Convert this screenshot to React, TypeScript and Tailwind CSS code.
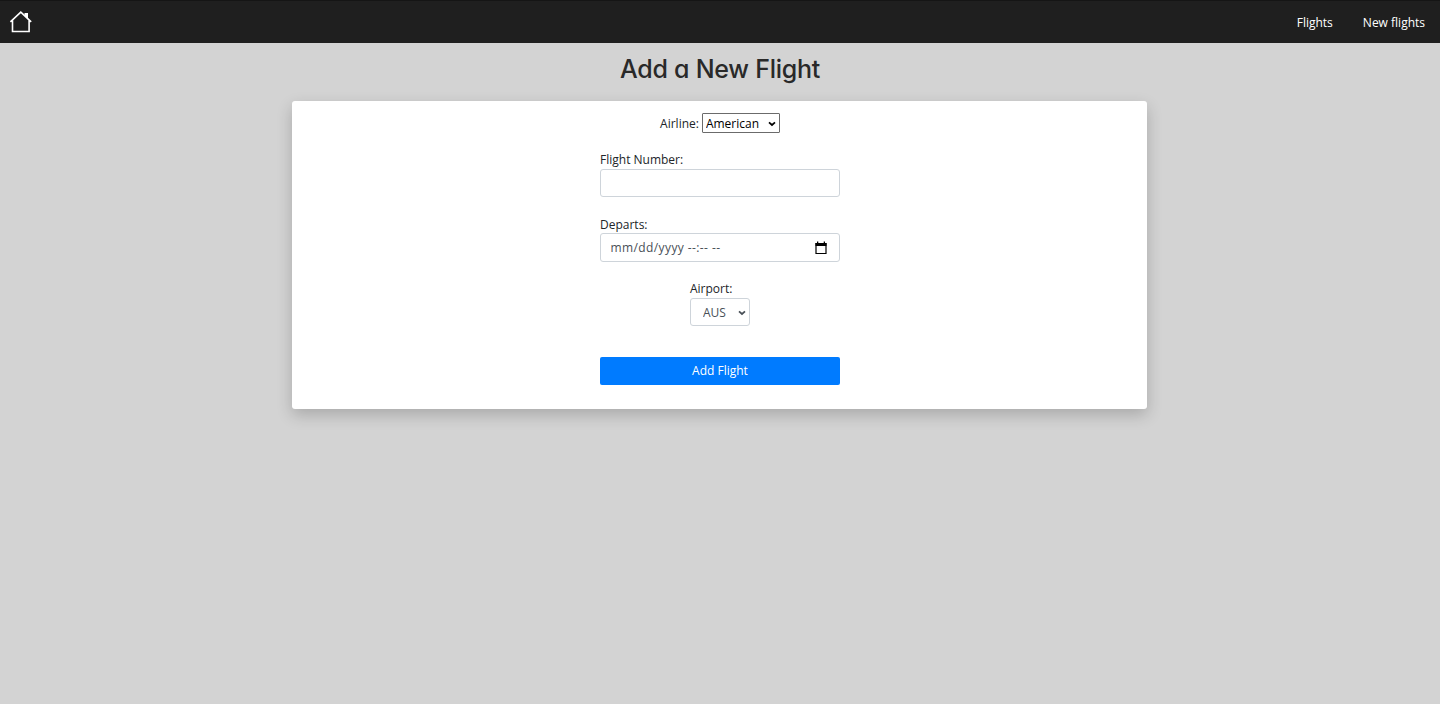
import React from 'react';

const field = 'rounded-[3px] border border-[#ced4da] bg-white text-[#495057]';

function Home() {
  return (
    <svg width="24" height="24" viewBox="0 0 24 24" fill="none" stroke="#fff" strokeWidth="1.6">
      <path d="M1.4 11.8 11.8 2.2l10.4 9.6M3.5 10.5v11h16.6v-11" />
      <path d="M15.5 3H19v6.5L15.5 6Z" fill="#fff" stroke="none" />
    </svg>
  );
}

function Chevron({ className }: { className: string }) {
  return (
    <svg className={'pointer-events-none absolute ' + className} width="8" height="6" viewBox="0 0 8 6" fill="none" stroke="currentColor" strokeWidth="1.7">
      <path d="m1 1.3 3 2.7 3-2.7" />
    </svg>
  );
}

function Calendar() {
  return (
    <svg width="12" height="14" viewBox="0 0 12 14" fill="none" stroke="#000">
      <path d="M1 2.5v10h10v-10Z" strokeWidth="1.2" />
      <path d="M.5 2h11v3H.5ZM2 .5h1.3V3H2ZM8.7.5H10V3H8.7Z" fill="#000" stroke="none" />
    </svg>
  );
}

export default function App() {
  return (
    <div className="min-h-[704px] bg-[#d3d3d3] font-['Open_Sans',sans-serif] text-[12px] leading-[18px] text-[#212529]">
      <nav className="flex h-[43px] items-center justify-between border-t border-[#151515] bg-[#1f1f1f] pr-[15px] pl-[9px] text-white">
        <a href="#" aria-label="Home"><Home /></a>
        <div className="flex gap-[30px] pt-px font-medium">
          <a href="#">Flights</a>
          <a href="#">New flights</a>
        </div>
      </nav>
      <h1 className="mt-[11px] text-center font-['Inter',sans-serif] text-[25px] leading-[30px] font-medium tracking-[-0.25px] text-[#292929] [font-feature-settings:'cv11']">Add a New Flight</h1>
      <form className="mr-auto ml-[292px] mt-[17px] flex h-[308px] w-[855px] flex-col items-center rounded-[3px] bg-white pt-[12px] pl-px shadow-[0_6px_16px_rgba(0,0,0,0.2)]">
        <label className="flex h-5 items-center gap-[3px]">
          <span className="pt-px">Airline:</span>
          <span className="relative block h-5 w-[78px]">
            <select className="block h-5 w-full appearance-none rounded-[1px] border border-[#6b6b6b] bg-white pt-px pl-[3px] text-black">
              <option>American</option>
            </select>
            <Chevron className="top-[8px] right-[4px] text-black" />
          </span>
        </label>
        <label className="mt-[18px] block w-[240px]">
          Flight Number:
          <input className={field + ' block h-[28px] w-full px-[9px]'} />
        </label>
        <label className="mt-[19px] block w-[240px]">
          <span className="block h-[17px]">Departs:</span>
          <span className={field + ' flex h-[29px] w-full items-center justify-between pr-[12px] pl-[9.5px]'}>
            <span className="tracking-[0.4px]">mm/dd/yyyy --:-- --</span>
            <Calendar />
          </span>
        </label>
        <label className="mt-[18px] block w-[60px]">
          Airport:
          <span className="relative block">
            <select className={field + ' block h-[28px] w-full appearance-none pt-px pl-[12px]'}>
              <option>AUS</option>
            </select>
            <Chevron className="top-[12px] right-[4px] text-[#495057]" />
          </span>
        </label>
        <button type="button" className="mt-[31px] h-[28px] w-[240px] rounded-[2px] bg-[#007bff] font-medium text-white">Add Flight</button>
      </form>
    </div>
  );
}
